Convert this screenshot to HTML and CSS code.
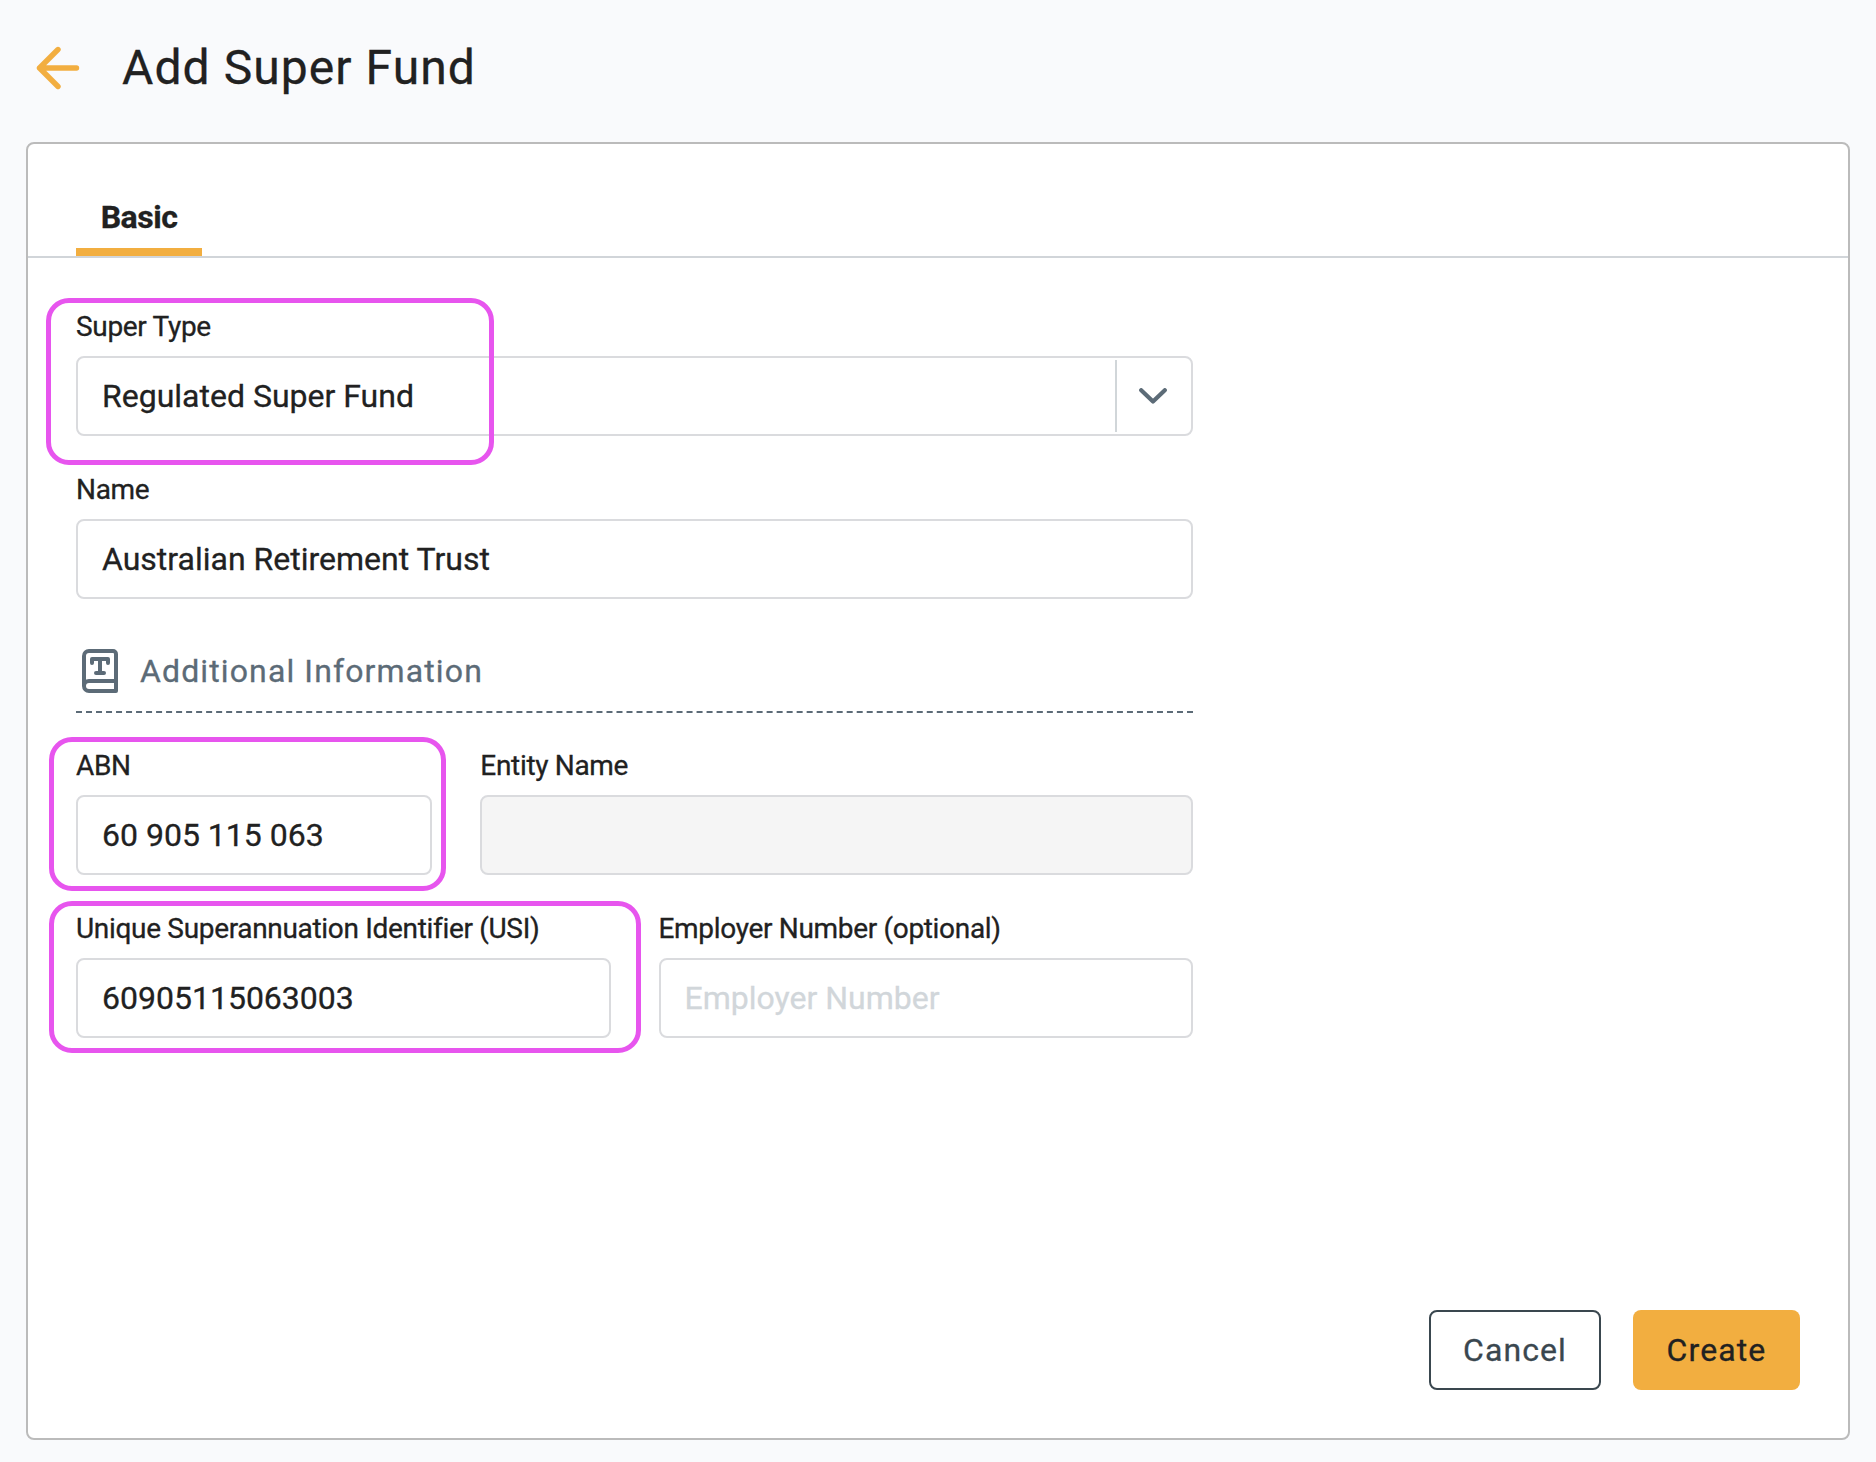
FILE: index.html
```
<!DOCTYPE html>
<html lang="en">
<head>
  <meta charset="UTF-8" />
  <meta name="viewport" content="width=device-width, initial-scale=1.0"/>
  <title>Add Super Fund</title>
  <link rel="stylesheet" href="styles.css">
</head>
<body>

  <header class="page-header">
    <a class="back" href="#" aria-label="Back">
      <svg width="44" height="44" viewBox="0 0 44 44" fill="none" stroke="currentColor" stroke-width="5.4" stroke-linecap="round" stroke-linejoin="round">
        <path d="M40.5 22H3.5M22 3.5L3.5 22L22 40.5"/>
      </svg>
    </a>
    <h1>Add Super Fund</h1>
  </header>

  <main class="card">
    <nav class="tabs">
      <a class="tab active" href="#">Basic</a>
    </nav>

    <form class="form">
      <div class="field">
        <label for="type">Super Type</label>
        <div class="select">
          <input id="type" type="text" value="Regulated Super Fund" readonly />
          <span class="toggle">
            <svg width="28" height="16" viewBox="0 0 28 16" fill="none" stroke="currentColor" stroke-width="4.2" stroke-linecap="round" stroke-linejoin="round">
              <path d="M2.2 2.2L14 13.6L25.8 2.2"/>
            </svg>
          </span>
        </div>
        <span class="highlight highlight-type"></span>
      </div>

      <div class="field">
        <label for="name">Name</label>
        <input id="name" type="text" value="Australian Retirement Trust" />
      </div>

      <h2 class="section-title">
        <svg width="36" height="44" viewBox="0 0 36 44" fill="none" stroke="currentColor" stroke-width="4" stroke-linecap="round" stroke-linejoin="round">
          <path d="M34 32V5a3 3 0 0 0-3-3H7a5 5 0 0 0-5 5v30a5 5 0 0 0 5 5h27V32H7a5 5 0 0 0-5 5"/>
          <path d="M10 14v-4h16v4M18 10v14M14 24h8"/>
        </svg>
        <span>Additional Information</span>
      </h2>

      <div class="row">
        <div class="field">
          <label for="abn">ABN</label>
          <input id="abn" type="text" value="60 905 115 063" />
          <span class="highlight highlight-abn"></span>
        </div>
        <div class="field wide">
          <label for="entity">Entity Name</label>
          <input id="entity" type="text" disabled />
        </div>
      </div>

      <div class="row">
        <div class="field">
          <label for="usi">Unique Superannuation Identifier (USI)</label>
          <input id="usi" type="text" value="60905115063003" />
          <span class="highlight highlight-usi"></span>
        </div>
        <div class="field">
          <label for="employer">Employer Number (optional)</label>
          <input id="employer" type="text" placeholder="Employer Number" />
        </div>
      </div>
    </form>

    <footer class="actions">
      <button class="btn cancel" type="button">Cancel</button>
      <button class="btn create" type="button">Create</button>
    </footer>
  </main>

</body>
</html>
```
FILE: styles.css
```
* {
  box-sizing: border-box;
}

body {
  margin: 0;
  height: 1462px;
  padding: 0 26px 22px;
  display: flex;
  flex-direction: column;
  font-family: Roboto, sans-serif;
  color: #212121;
  background: #f9fafc;
  -webkit-text-stroke: 0.3px;
}

.page-header {
  display: flex;
  align-items: center;
  gap: 42px;
  height: 142px;
  padding: 0 0 6px 10px;
}

.back {
  display: flex;
  color: #f2ae40;
}

h1 {
  margin: 0;
  font-size: 48px;
  font-weight: 400;
  line-height: 56px;
  letter-spacing: 1.07px;
}

.card {
  flex: 1;
  display: flex;
  flex-direction: column;
  background: #fff;
  border: 2px solid #bbb;
  border-radius: 8px;
}

.tabs {
  display: flex;
  height: 114px;
  padding: 0 48px;
  align-items: flex-end;
  border-bottom: 2px solid #d1d5d9;
}

.tab {
  width: 126px;
  padding-bottom: 12px;
  border-bottom: 8px solid #f2ae40;
  font-size: 32px;
  font-weight: 700;
  line-height: 38px;
  letter-spacing: -0.5px;
  text-align: center;
  text-decoration: none;
  color: inherit;
}

.form {
  width: 1213px;
  padding: 52px 48px 0;
}

.field {
  position: relative;
  flex: 1 1 0;
  min-width: 0;
  height: 126px;
  margin-bottom: 37px;
}

.field.wide {
  flex-grow: 2;
}

label {
  display: block;
  padding-top: 1px;
  margin-bottom: 13px;
  font-size: 28px;
  line-height: 32px;
  letter-spacing: -0.32px;
  white-space: nowrap;
}

input {
  display: block;
  width: 100%;
  height: 80px;
  padding: 0 24px;
  font-family: inherit;
  font-size: 32px;
  color: #212121;
  background: #fff;
  border: 2px solid #dadbde;
  border-radius: 8px;
  outline: none;
}

input:disabled {
  background: #f5f5f5;
}

input::placeholder {
  color: #d1d6da;
  opacity: 1;
}

.select {
  position: relative;
}

.toggle {
  position: absolute;
  top: 4px;
  right: 2px;
  width: 76px;
  height: 72px;
  display: flex;
  align-items: center;
  justify-content: center;
  padding-right: 2px;
  border-left: 2px solid #d1d6d9;
  color: #5c6b77;
}

.section-title {
  display: flex;
  align-items: center;
  gap: 22px;
  height: 77px;
  margin: 0 0 36px;
  padding: 0 0 5px 6px;
  font-size: 32px;
  font-weight: 400;
  letter-spacing: 1.12px;
  color: #5c6b77;
  border-bottom: 2px dashed #5c6b77;
}

.row {
  display: flex;
  gap: 48px;
}

.highlight {
  position: absolute;
  border: 5px solid #e755ee;
  border-radius: 23px;
  pointer-events: none;
}

.highlight-type {
  top: -12px;
  left: -30px;
  width: 448px;
  height: 167px;
}

.highlight-abn {
  top: -12px;
  left: -27px;
  width: 397px;
  height: 154px;
}

.highlight-usi {
  top: -11px;
  left: -27px;
  width: 592px;
  height: 152px;
}

.actions {
  display: flex;
  justify-content: flex-end;
  gap: 32px;
  margin-top: auto;
  padding: 0 48px 48px;
}

.btn {
  height: 80px;
  padding: 0;
  font-family: inherit;
  font-size: 32px;
  letter-spacing: 1.1px;
  border-radius: 8px;
  cursor: pointer;
}

.cancel {
  width: 172px;
  color: #3a474f;
  background: #fff;
  border: 2px solid #3a474f;
}

.create {
  width: 167px;
  color: #212121;
  background: #f2ae40;
  border: none;
}
```
